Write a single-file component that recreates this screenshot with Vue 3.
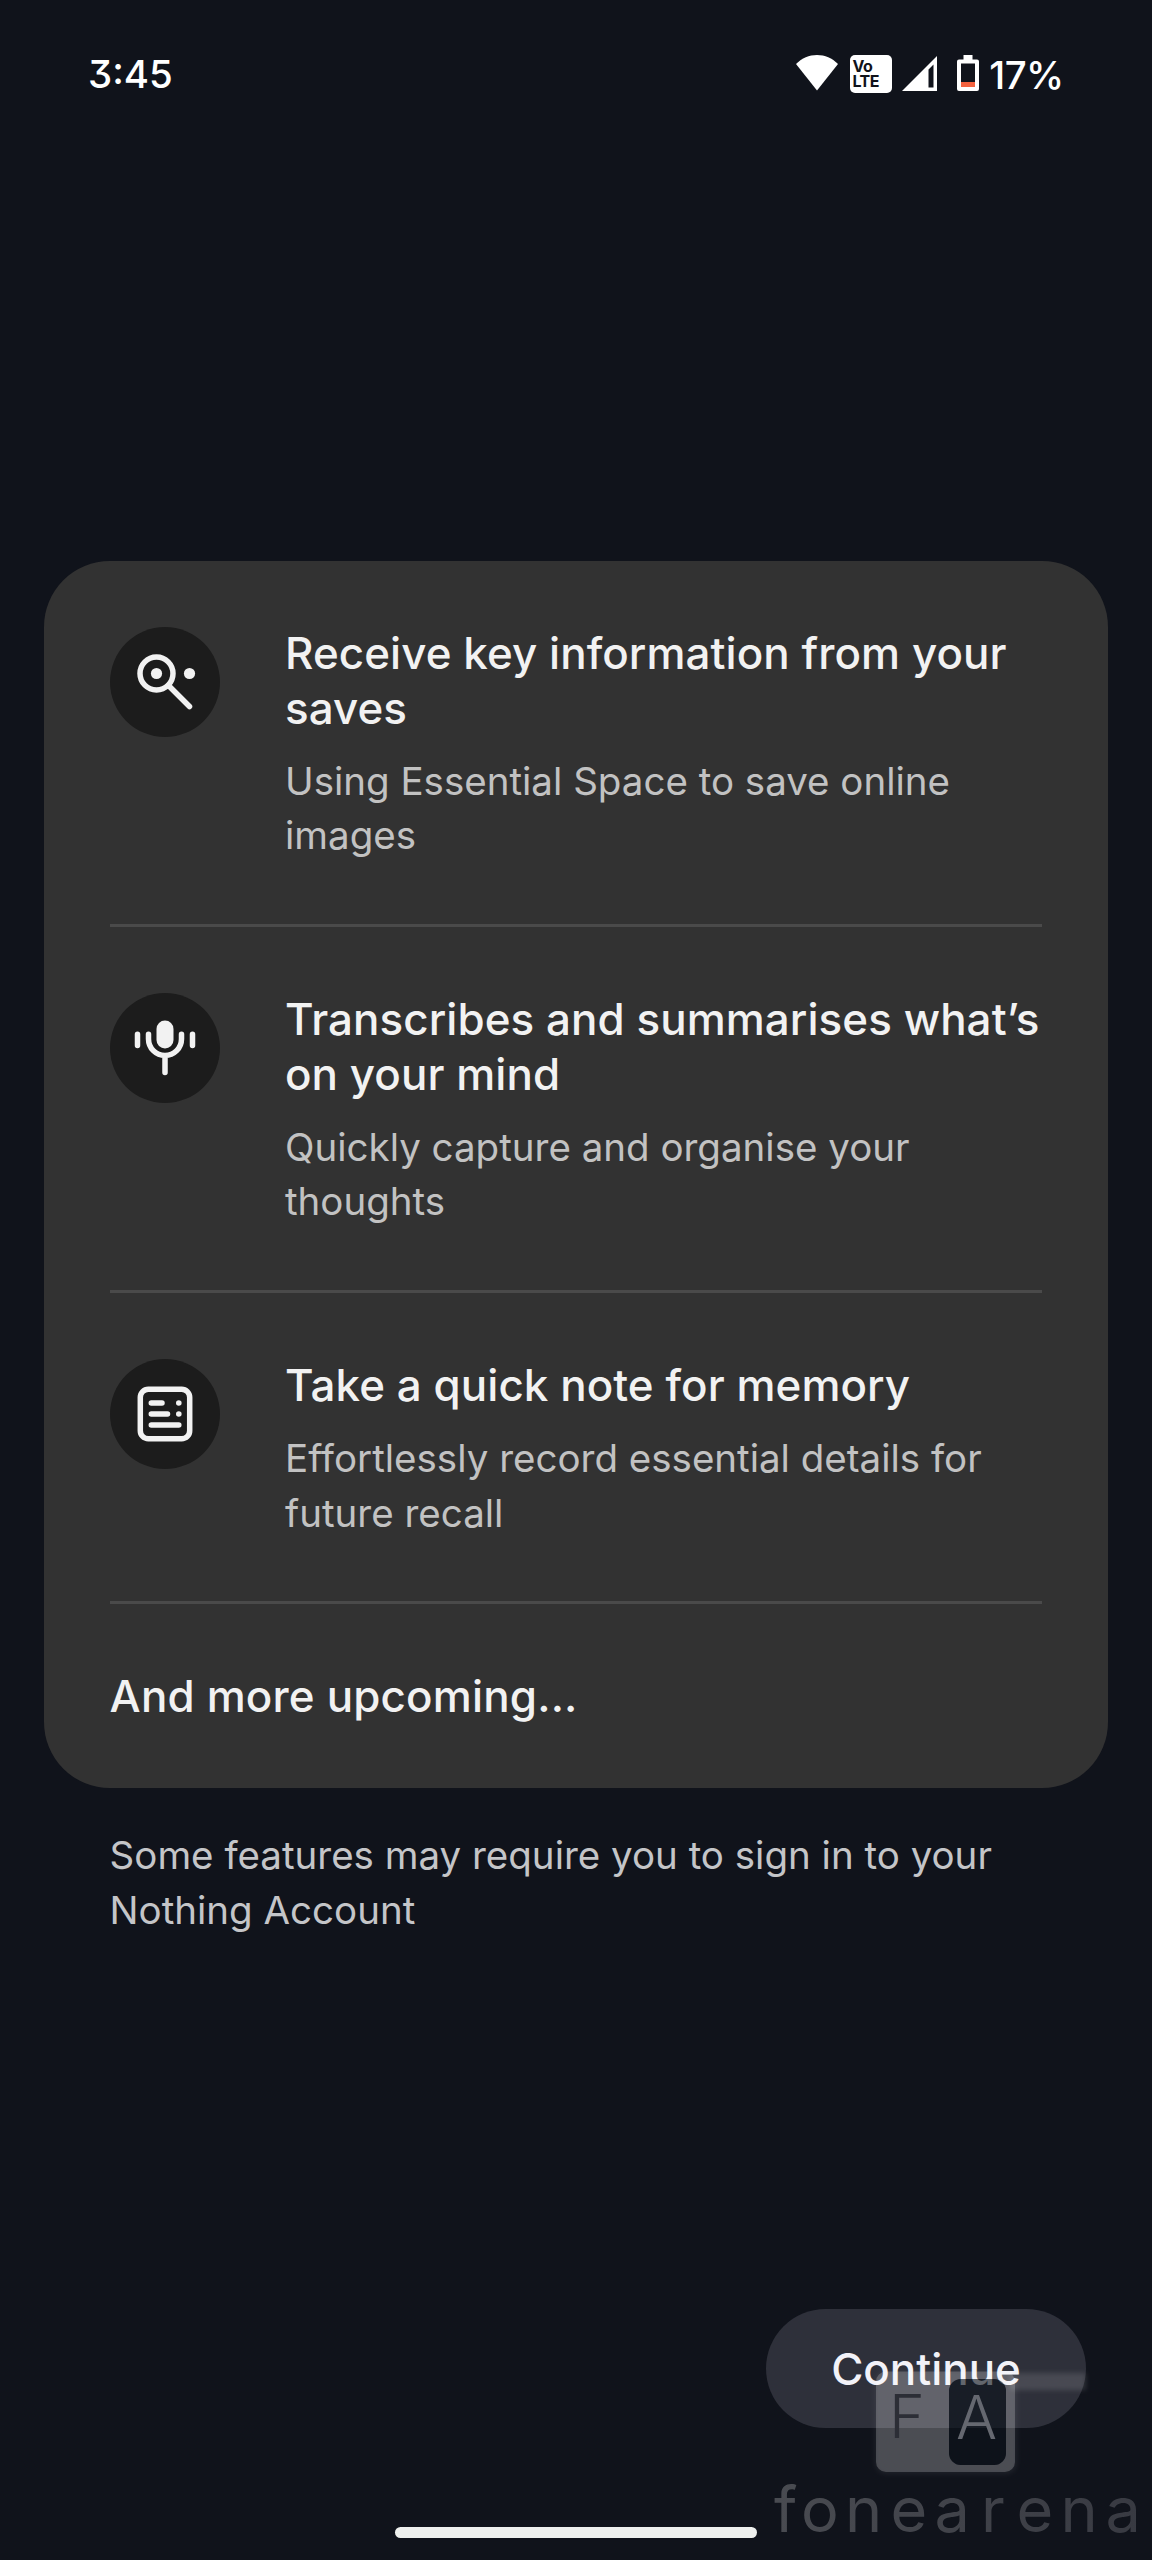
<template>
  <div class="screen">
    <header class="status-bar">
      <span class="clock">3:45</span>
      <div class="status-icons">
        <svg class="wifi" viewBox="0 0 42 36">
          <path d="M21 35.5 0 9C6 3 13 0 21 0s15 3 21 9z" fill="#fff" />
        </svg>
        <svg class="volte" viewBox="0 0 42 38">
          <rect width="42" height="38" rx="5" fill="#fff" />
          <text x="2.500" y="16.500">Vo</text>
          <text x="2.500" y="32">LTE</text>
        </svg>
        <svg class="signal" viewBox="0 0 35 35">
          <path d="M35 0v35H0zM31.500 8.500l-5 5V31.500h5z" fill="#fff" fill-rule="evenodd" />
        </svg>
        <svg class="battery" viewBox="0 0 22 36">
          <path d="M6.500 0h9v4.500H20a2 2 0 0 1 2 2V34a2 2 0 0 1-2 2H2a2 2 0 0 1-2-2V6.500a2 2 0 0 1 2-2h4.500zM4 8.500V32h14V8.500z" fill="#fff" fill-rule="evenodd" />
          <rect x="4" y="27" width="14" height="5" fill="#f4623f" />
        </svg>
        <span class="percent">17%</span>
      </div>
    </header>

    <main class="content">
      <section class="card">
        <div v-for="item in features" :key="item.icon" class="feature">
          <div class="feature-icon">
            <svg v-if="item.icon === 'search'" viewBox="0 0 110 110">
              <circle cx="46.500" cy="46.500" r="16.500" fill="none" stroke="#f2f2f2" stroke-width="5.500" />
              <circle cx="46.500" cy="46.500" r="5.600" fill="#f2f2f2" />
              <circle cx="79.500" cy="46.500" r="5.600" fill="#f2f2f2" />
              <path d="M58.500 58.500 79.500 79.500" stroke="#f2f2f2" stroke-width="5.500" stroke-linecap="round" />
            </svg>
            <svg v-else-if="item.icon === 'mic'" viewBox="0 0 110 110">
              <rect x="46.500" y="27.500" width="17" height="28" rx="8.500" fill="#f2f2f2" />
              <path d="M38.500 41.200V46a16.500 16.500 0 0 0 33 0V41.200M55 63V79.500M27.500 41.200V52.500M82.500 41.200V52.500" fill="none" stroke="#f2f2f2" stroke-width="5.500" stroke-linecap="round" />
            </svg>
            <svg v-else viewBox="0 0 110 110">
              <rect x="30.300" y="30.300" width="49.400" height="49.400" rx="8" fill="none" stroke="#f2f2f2" stroke-width="5.500" />
              <path d="M41.300 44H52M41.300 55H57.500M41.300 66H68.800" stroke="#f2f2f2" stroke-width="5.500" stroke-linecap="round" />
              <circle cx="68.800" cy="44" r="2.800" fill="#f2f2f2" />
              <circle cx="68.800" cy="55" r="2.800" fill="#f2f2f2" />
            </svg>
          </div>
          <div class="feature-text">
            <h2><span v-for="line in item.title" :key="line">{{ line }}</span></h2>
            <p><span v-for="line in item.text" :key="line">{{ line }}</span></p>
          </div>
        </div>
        <div class="upcoming">And more upcoming...</div>
      </section>
      <p class="footnote">
        <span>Some features may require you to sign in to your</span>
        <span>Nothing Account</span>
      </p>
    </main>

    <button class="continue-button">Continue</button>
    <div class="home-indicator"></div>

    <!-- Watermark over the bottom right corner -->
    <svg class="watermark" viewBox="0 0 412 200">
      <defs>
        <filter id="glow" x="-20%" y="-50%" width="140%" height="200%">
          <feGaussianBlur stdDeviation="2.500" />
        </filter>
        <linearGradient id="fade" gradientUnits="userSpaceOnUse" x1="35" y1="0" x2="400" y2="0">
          <stop offset="0" stop-color="#494b51" />
          <stop offset="1" stop-color="#383a42" />
        </linearGradient>
      </defs>
      <rect x="270" y="13" width="76" height="17" fill="#fff" opacity="0.12" filter="url(#glow)" />
      <rect x="135" y="11" width="142" height="103" rx="11" fill="#fff" opacity="0.06" filter="url(#glow)" />
      <path d="M146 11.500H265a10 10 0 0 1 10 10V102a10 10 0 0 1-10 10H146a10 10 0 0 1-10-10V21.500a10 10 0 0 1 10-10zM221 19a12 12 0 0 0-12 12V93a12 12 0 0 0 12 12h33a12 12 0 0 0 12-12V31a12 12 0 0 0-12-12z" fill="#fff" fill-rule="evenodd" opacity="0.2" />
      <rect x="209" y="19" width="57" height="86" rx="12" fill="#020910" opacity="0.6" />
      <text class="mark-f" x="149" y="78.300">F</text>
      <text class="mark-a" x="216" y="79.300">A</text>
      <text class="mark-name" x="34 61 105 150.500 194.500 241 276.500 320.500 365.500" y="172">fonearena</text>
    </svg>
  </div>
</template>

<script setup>
const features = [
  {
    icon: 'search',
    title: ['Receive key information from your', 'saves'],
    text: ['Using Essential Space to save online', 'images']
  },
  {
    icon: 'mic',
    title: ['Transcribes and summarises what’s', 'on your mind'],
    text: ['Quickly capture and organise your', 'thoughts']
  },
  {
    icon: 'note',
    title: ['Take a quick note for memory'],
    text: ['Effortlessly record essential details for', 'future recall']
  }
];
</script>

<style>
body {
  background: #10131b;
}
</style>

<style scoped>
.screen {
  position: relative;
  box-sizing: border-box;
  width: 1152px;
  height: 2560px;
  display: flex;
  flex-direction: column;
  background: #10131b;
  font-family: Inter, "Liberation Sans", sans-serif;
  overflow: hidden;
}

/* --- Status bar --- */
.status-bar {
  box-sizing: border-box;
  height: 150px;
  padding: 51px 88.500px 0 88px;
  display: flex;
  justify-content: space-between;
  align-items: flex-start;
  color: #fff;
  font-size: 38.4px;
  font-weight: 500;
  line-height: 46px;
}
.clock {
  font-feature-settings: "cv09";
}
.status-icons {
  display: flex;
  align-items: flex-start;
}
.wifi {
  width: 42px;
  height: 36px;
  margin: 4px 12px 0 0;
}
.volte {
  width: 42px;
  height: 38px;
  margin: 4px 10px 0 0;
}
.volte text {
  font-size: 16px;
  font-weight: 700;
  letter-spacing: -0.5px;
  fill: #10131b;
}
.signal {
  width: 35px;
  height: 35px;
  margin: 5px 20px 0 0;
}
.battery {
  width: 22px;
  height: 36px;
  margin: 4px 10.500px 0 0;
}
.percent {
  margin-top: 1px;
  letter-spacing: -0.6px;
}

/* --- Feature card --- */
.content {
  padding: 411px 44px 0;
}
.card {
  box-sizing: border-box;
  height: 1227px;
  padding: 0 66px 0 65.600px;
  border-radius: 66px;
  background: #323232;
}
.feature {
  display: flex;
  gap: 65.400px;
  padding: 65.800px 0 60.800px;
  border-bottom: 3px solid #4a4a4a;
}
.feature-icon {
  flex: none;
  width: 110px;
  height: 110px;
  border-radius: 50%;
  background: #1c1c1c;
}
.feature-icon svg {
  display: block;
}
.feature-text {
  margin-top: -0.600px;
  white-space: nowrap;
}
h2,
p {
  margin: 0;
  line-height: 54.860px;
}
h2 span,
p span {
  display: block;
}
h2,
.upcoming {
  color: #f2f2f2;
  font-size: 43.900px;
  font-weight: 500;
  letter-spacing: 0.080px;
}
p {
  color: #c2c2c2;
  font-size: 38.500px;
  font-weight: 400;
}
.feature-text p {
  margin-top: 17.600px;
}
.upcoming {
  padding-top: 64.500px;
  line-height: 54.860px;
  letter-spacing: 0.180px;
}
.footnote {
  padding: 40px 66px 0 65.600px;
  color: #c4c5c8;
}

/* --- Bottom area --- */
.continue-button {
  align-self: flex-end;
  width: 320px;
  height: 119px;
  margin: auto 66px 99px 0;
  padding: 0;
  border: none;
  border-radius: 60px;
  background: #2e303a;
  color: #f2f2f8;
  font-family: inherit;
  font-size: 43.900px;
  font-weight: 500;
}
.home-indicator {
  align-self: center;
  width: 362px;
  height: 11px;
  margin-bottom: 22px;
  border-radius: 6px;
  background: #eef0ee;
}

/* --- Watermark --- */
.watermark {
  position: absolute;
  right: 0;
  bottom: 0;
  width: 412px;
  height: 200px;
}
.mark-f {
  font-size: 61px;
  font-weight: 300;
  fill: #2c2e36;
}
.mark-a {
  font-size: 61px;
  font-weight: 300;
  fill: #656870;
}
.mark-name {
  font-size: 63px;
  font-weight: 400;
  fill: url(#fade);
}
</style>
